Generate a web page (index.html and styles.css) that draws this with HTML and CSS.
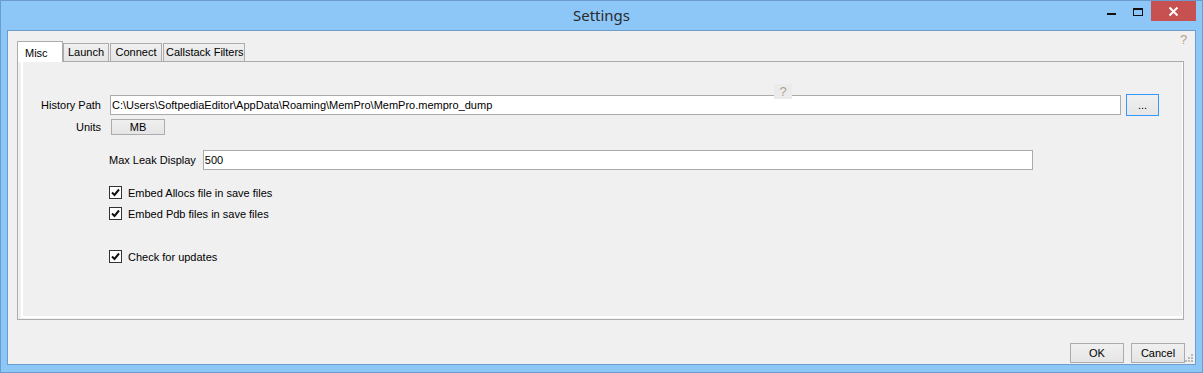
FILE: index.html
```html
<!DOCTYPE html>
<html lang="en">
<head>
    <meta charset="UTF-8">
    <title>Settings</title>
    <link rel="stylesheet" href="styles.css">
</head>
<body>

    <div class="window">
        <div class="titlebar">
            <div class="title">Settings</div>
            <div class="caption">
                <div class="cap-btn">
                    <svg width="26" height="20" viewBox="0 0 26 20"><rect x="8" y="12" width="9" height="2" fill="#111"/></svg>
                </div>
                <div class="cap-btn">
                    <svg width="26" height="20" viewBox="0 0 26 20"><rect x="8.5" y="7.5" width="9" height="7" fill="none" stroke="#111"/><rect x="8" y="7" width="10" height="2" fill="#111"/></svg>
                </div>
                <div class="cap-btn cap-close">
                    <svg width="45" height="20" viewBox="0 0 45 20"><path d="M18.5 6.5 L26.5 14.5 M26.5 6.5 L18.5 14.5" stroke="#fff" stroke-width="2"/></svg>
                </div>
            </div>
        </div>

        <div class="client">
            <span class="help-corner">?</span>

            <div class="tabs">
                <div class="tab-strip">
                    <div class="tab selected">Misc</div>
                    <div class="tab">Launch</div>
                    <div class="tab">Connect</div>
                    <div class="tab">Callstack Filters</div>
                </div>
                <div class="tab-panel">
                    <div class="tab-page">
                        <span class="help-tip">?</span>

                        <!-- history path -->
                        <div class="row path-row">
                            <label class="side-label">History Path</label>
                            <input class="field path-field" type="text" value="C:\Users\SoftpediaEditor\AppData\Roaming\MemPro\MemPro.mempro_dump">
                            <button class="btn browse">...</button>
                        </div>

                        <div class="row units-row">
                            <label class="side-label">Units</label>
                            <button class="btn units">MB</button>
                        </div>

                        <div class="row leak-row">
                            <label>Max Leak Display</label>
                            <input class="field leak-field" type="text" value="500">
                        </div>

                        <div class="check-row first">
                            <span class="check"><svg width="11" height="11" viewBox="0 0 11 11"><path d="M2 5.5 L4.5 8 L9 2.5" fill="none" stroke="#111" stroke-width="2"/></svg></span>
                            <span>Embed Allocs file in save files</span>
                        </div>
                        <div class="check-row">
                            <span class="check"><svg width="11" height="11" viewBox="0 0 11 11"><path d="M2 5.5 L4.5 8 L9 2.5" fill="none" stroke="#111" stroke-width="2"/></svg></span>
                            <span>Embed Pdb files in save files</span>
                        </div>
                        <div class="check-row gap">
                            <span class="check"><svg width="11" height="11" viewBox="0 0 11 11"><path d="M2 5.5 L4.5 8 L9 2.5" fill="none" stroke="#111" stroke-width="2"/></svg></span>
                            <span>Check for updates</span>
                        </div>
                    </div>
                </div>
            </div>

            <div class="dialog-buttons">
                <button class="btn action">OK</button>
                <button class="btn action">Cancel</button>
            </div>

            <svg class="grip" width="9" height="9" viewBox="0 0 9 9">
                <rect x="6" y="0" width="2" height="2" fill="#b9b9b9"/>
                <rect x="3" y="3" width="2" height="2" fill="#b9b9b9"/>
                <rect x="6" y="3" width="2" height="2" fill="#b9b9b9"/>
                <rect x="0" y="6" width="2" height="2" fill="#b9b9b9"/>
                <rect x="3" y="6" width="2" height="2" fill="#b9b9b9"/>
                <rect x="6" y="6" width="2" height="2" fill="#b9b9b9"/>
            </svg>
        </div>
    </div>

</body>
</html>
```

FILE: styles.css
```css
body {
    margin: 0;
    font-family: "Liberation Sans", Arial, sans-serif;
    font-size: 11px;
    color: #000;
}

.window {
    width: 1203px;
    height: 373px;
    box-sizing: border-box;
    border: 1px solid #6b9ccd;
    background: #8cc7f8;
    padding: 0 6px 7px;
    display: flex;
    flex-direction: column;
}

.titlebar {
    height: 29px;
    display: grid;
    grid-template-columns: 1fr auto 1fr;
}

.title {
    grid-column: 2;
    font-family: "Noto Sans", "Open Sans", sans-serif;
    font-size: 15px;
    line-height: 29px;
    color: #2b2b2b;
}

.caption {
    grid-column: 3;
    justify-self: end;
    display: flex;
    align-items: flex-start;
}

.cap-btn {
    width: 26px;
    height: 20px;
}

.cap-btn svg {
    display: block;
}

.cap-close {
    width: 45px;
    background: #c75050;
}

.client {
    flex: 1;
    position: relative;
    background: #f0f0f0;
    border: 1px solid #6e9dcc;
    display: flex;
    flex-direction: column;
}

.help-corner {
    position: absolute;
    left: 1172px;
    top: 1px;
    font-size: 13px;
    color: #b09f8c;
}

.tabs {
    margin: 10px 11px 0 9px;
}

.tab-strip {
    height: 20px;
    display: flex;
    align-items: flex-end;
}

.tab {
    height: 17px;
    line-height: 16px;
    box-sizing: content-box;
    border: 1px solid #acacac;
    border-bottom: none;
    background: linear-gradient(#f0f0f0, #e5e5e5);
    padding: 0 2px;
    margin-left: 1px;
    white-space: nowrap;
    text-align: center;
}

.tab:nth-child(2) { width: 40px; margin-left: 0; }
.tab:nth-child(3) { width: 46px; }
.tab:nth-child(4) { width: 76px; }

.tab.selected {
    height: 20px;
    line-height: 22px;
    margin: 0 0 -1px 0;
    padding: 0 4px 0 7px;
    width: 33px;
    text-align: left;
    background: #fff;
    position: relative;
    z-index: 1;
}

.tab-panel {
    height: 259px;
    box-sizing: border-box;
    border: 1px solid #acacac;
    background: #f0f0f0;
    padding: 0 0 1px 3px;
}

.tab-page {
    position: relative;
    height: 100%;
    box-sizing: border-box;
    border-left: 2px solid #fff;
    border-bottom: 2px solid #fff;
    border-right: 1px solid #fff;
    padding-top: 32px;
}

.help-tip {
    position: absolute;
    left: 751px;
    top: 22px;
    width: 18px;
    height: 15px;
    background: #ebebeb;
    text-align: center;
    font-size: 13px;
    line-height: 15px;
    color: #b09f8c;
}

.row {
    display: flex;
    align-items: center;
}

.side-label {
    width: 78px;
    text-align: right;
    margin-right: 9px;
}

.field {
    height: 20px;
    box-sizing: border-box;
    border: 1px solid #ababab;
    background: #fff;
    font: inherit;
    padding: 0 1px;
    margin: 0;
    outline: none;
}

.path-field {
    width: 1011px;
}

.btn {
    font: inherit;
    color: #000;
    border: 1px solid #acacac;
    background: linear-gradient(#f0f0f0, #e5e5e5);
    padding: 0;
    margin: 0;
}

.browse {
    width: 33px;
    height: 22px;
    margin-left: 5px;
    border-color: #3399ff;
    line-height: 18px;
}

.units-row {
    margin-top: 3px;
}

.units {
    width: 54px;
    height: 16px;
    margin-left: 1px;
}

.leak-row {
    margin-top: 15px;
    padding-left: 86px;
}

.leak-row label {
    margin-right: 7px;
}

.leak-field {
    width: 830px;
}

.check-row {
    display: flex;
    align-items: center;
    padding-left: 86px;
    margin-top: 8px;
    height: 13px;
}

.check-row.first {
    margin-top: 16px;
}

.check-row.gap {
    margin-top: 30px;
}

.check {
    width: 11px;
    height: 11px;
    border: 1px solid #333;
    background: #fff;
    margin-right: 6px;
}

.check svg {
    display: block;
}

.dialog-buttons {
    display: flex;
    justify-content: flex-end;
    gap: 7px;
    padding: 23px 10px 0 0;
}

.action {
    width: 54px;
    height: 20px;
}

.grip {
    position: absolute;
    right: 1px;
    bottom: 1px;
}
```
